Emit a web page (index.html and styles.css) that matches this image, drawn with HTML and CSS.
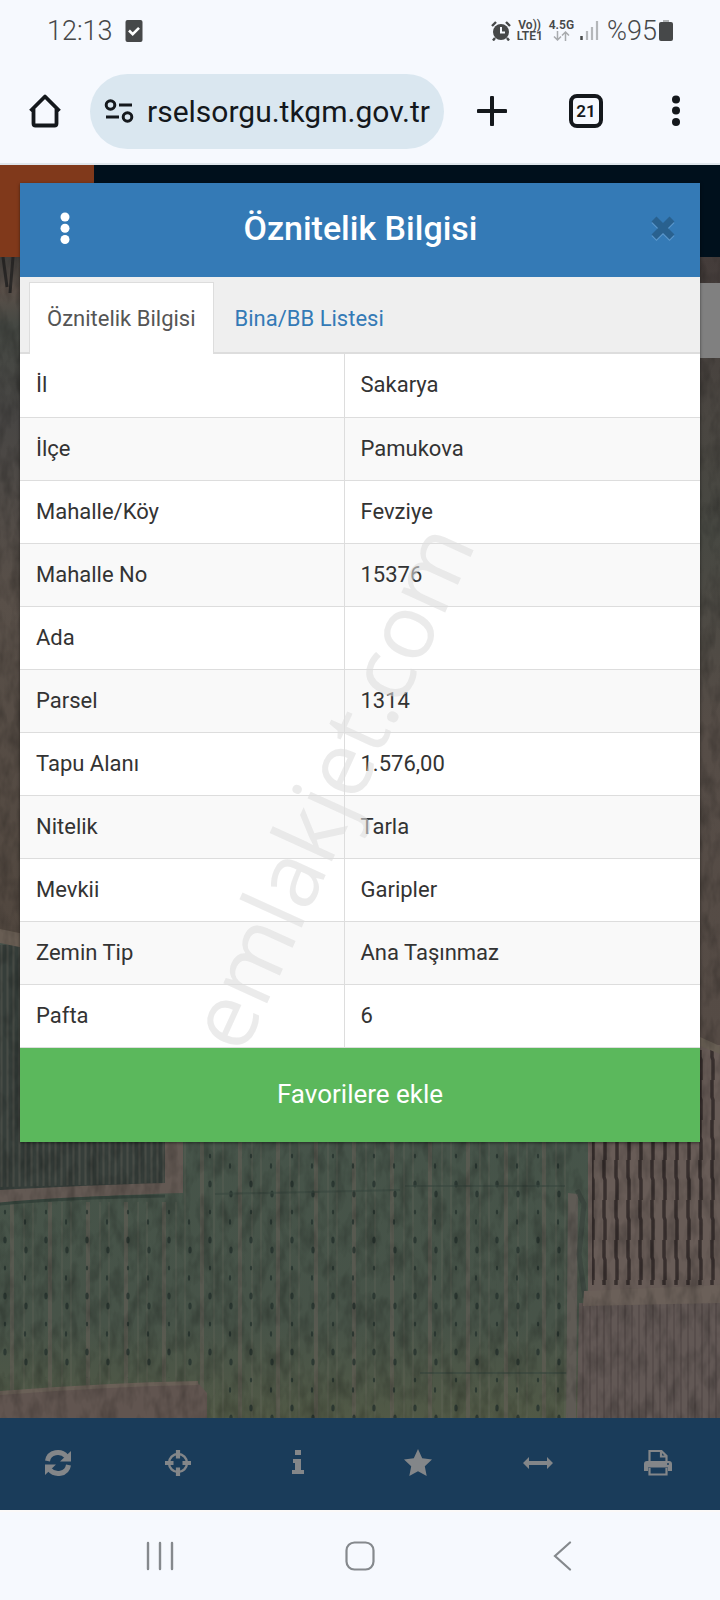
FILE: index.html
```html
<!DOCTYPE html>
<html lang="tr">
<head>
<meta charset="utf-8">
<meta name="viewport" content="width=device-width, initial-scale=1">
<title>Öznitelik Bilgisi</title>
<link rel="stylesheet" href="styles.css">
</head>
<body>
<header class="status">
  <span class="clock">12:13</span>
  <svg class="status-check" width="18" height="22" viewBox="0 0 18 22"><rect x="0.5" width="17" height="22" rx="2" fill="#464849"/><path d="M4 10.500l3.700 3.700L14 7.800" fill="none" stroke="#fff" stroke-width="2.600"/></svg>
  <div class="status-right">
    <svg width="20" height="20" viewBox="0 0 20 20"><circle cx="10" cy="11" r="8" fill="#464849"/><path d="M1 5l4-4M19 5l-4-4M4 17l-2 2.500M16 17l2 2.500" stroke="#464849" stroke-width="2.400"/><path d="M10 6v5.500h4" fill="none" stroke="#f6f9fe" stroke-width="2"/></svg>
    <span class="net"><span>Vo))</span><span>LTE1</span></span>
    <span class="net"><span>4.5G</span><svg width="17" height="10" viewBox="0 0 17 10"><path d="M4.500 0v9M1 5.500l3.500 3.500L8 5.500M12.500 10V1M9 4.500L12.500 1 16 4.500" fill="none" stroke="#a8abae" stroke-width="1.500"/></svg></span>
    <svg width="19" height="20" viewBox="0 0 19 20"><path d="M1.500 15v4" stroke="#464849" stroke-width="2.500"/><path d="M7 10v9M12 6v13M17 0v19" stroke="#b4b7ba" stroke-width="2.200"/></svg>
    <span class="percent">%95</span>
    <svg class="battery" width="14" height="21" viewBox="0 0 14 21"><path d="M4 0h6v3H4z" fill="#b0b3b5"/><rect y="2" width="14" height="19" rx="2" fill="#464849"/></svg>
  </div>
</header>

<div class="browser">
  <button class="icon-button home" aria-label="Ana sayfa"><svg width="36" height="36" viewBox="0 0 36 36"><path d="M3.500 18L18 3.500 32.500 18M6.500 15v15.500q0 2 2 2h19q2 0 2-2V15" fill="none" stroke="#14181c" stroke-width="3.800" stroke-linejoin="round"/></svg></button>
  <div class="address">
    <svg width="30" height="26" viewBox="0 0 30 26"><g fill="none" stroke="#14181c" stroke-width="3"><circle cx="6.500" cy="7" r="4.300"/><path d="M15 7h13M2 19h13"/><circle cx="23.500" cy="19" r="4.300"/></g></svg>
    <div class="url"><span>rselsorgu.tkgm.gov.tr</span></div>
  </div>
  <button class="icon-button plus" aria-label="Yeni sekme"><svg width="30" height="30" viewBox="0 0 30 30"><path d="M15 1.500v27M1.500 15h27" stroke="#14181c" stroke-width="4" stroke-linecap="round"/></svg></button>
  <button class="tab-count" aria-label="21 sekme">21</button>
  <button class="icon-button more" aria-label="Menü"><svg width="8" height="32" viewBox="0 0 8 32"><g fill="#14181c"><circle cx="4" cy="4.500" r="4"/><circle cx="4" cy="15.500" r="4"/><circle cx="4" cy="27" r="4"/></g></svg></button>
</div>

<main class="stage">
  <div class="page">
    <div class="page-head"><div class="page-logo"></div></div>
    <div class="map">
      <svg class="map-art" viewBox="0 257 720 1161" preserveAspectRatio="xMidYMid slice" aria-hidden="true">
        <defs>
          <linearGradient id="left" x1="0" y1="0" x2="0" y2="1">
            <stop offset="0" stop-color="#45423f"/><stop offset=".05" stop-color="#5a5049"/><stop offset=".1" stop-color="#454843"/><stop offset=".24" stop-color="#484644"/><stop offset=".5" stop-color="#595049"/><stop offset="1" stop-color="#51473f"/>
          </linearGradient>
          <linearGradient id="right" x1="0" y1="0" x2="0" y2="1">
            <stop offset="0" stop-color="#443c3a"/><stop offset=".2" stop-color="#4a4641"/><stop offset=".35" stop-color="#474842"/><stop offset=".6" stop-color="#564d47"/><stop offset="1" stop-color="#554b45"/>
          </linearGradient>
          <linearGradient id="green" x1="0" y1="0" x2="0" y2="1">
            <stop offset="0" stop-color="#45554b"/><stop offset=".8" stop-color="#475348"/><stop offset="1" stop-color="#515946"/>
          </linearGradient>
          <pattern id="furrow" width="6" height="60" patternUnits="userSpaceOnUse"><path d="M1.500 0v60" stroke="#5b5b53" stroke-width="2"/></pattern>
          <pattern id="rows" width="12" height="40" patternUnits="userSpaceOnUse"><path d="M4 0v17l1 3v20" fill="none" stroke="#382f2e" stroke-width="3.500"/></pattern>
          <pattern id="lines" width="38" height="60" patternUnits="userSpaceOnUse"><path d="M12 0v60" stroke="#625d54" stroke-width="4" opacity=".6"/><path d="M24 0v60M33 0v60" stroke="#65665c" stroke-width="1.500" opacity=".35"/></pattern>
          <pattern id="trees" width="41" height="56" patternUnits="userSpaceOnUse"><g fill="#22302b" opacity=".75"><ellipse cx="5" cy="8" rx="1.700" ry="3.500"/><ellipse cx="5" cy="36" rx="1.200" ry="2.500"/><ellipse cx="26" cy="18" rx="1.700" ry="3.500"/><ellipse cx="25" cy="46" rx="1.200" ry="3"/></g></pattern>
          <pattern id="fine" width="7" height="30" patternUnits="userSpaceOnUse"><path d="M2 0v30" stroke="#514846" stroke-width="2"/></pattern>
          <filter id="grain" x="0" y="0" width="100%" height="100%"><feTurbulence type="fractalNoise" baseFrequency=".09 .04" numOctaves="3" seed="4"/><feColorMatrix values="0 0 0 0 0 0 0 0 0 0 0 0 0 0 0 1.500 0 0 0 -.6"/></filter>
        </defs>
        <rect y="257" width="360" height="680" fill="url(#left)"/>
        <rect x="360" y="257" width="360" height="790" fill="url(#right)"/>
        <path d="M3 257l4 30M13 257l-3 36" stroke="#2b2928" stroke-width="3"/>
        <path d="M0 945h360v100h360v373H0z" fill="url(#green)"/>
        <path d="M0 945h166v241L0 1192z" fill="#363e3a"/>
        <path d="M0 945h166v238L0 1187z" fill="url(#furrow)" opacity=".5"/>
        <path d="M0 929l24 5v14l-24-5z" fill="#685d53"/>
        <path d="M0 1202h184v-61h384v277H0z" fill="url(#lines)"/>
        <path d="M200 1141h375v277H212v-40H0v-170h200z" fill="url(#trees)"/>
        <path d="M405 1186h160M420 1373h150M215 1194l185-4" stroke="#39483f" stroke-width="2" fill="none" opacity=".6"/>
        <path d="M165 1141h18v52q-80 2-183 10v-13q90-5 165-7z" fill="#635953"/>
        <path d="M0 1204q60-6 165-8" stroke="#36443c" stroke-width="3" fill="none"/>
        <path d="M588 1045h132v248H588z" fill="#685c57"/>
        <path d="M592 1050h128v235H592z" fill="url(#rows)"/>
        <path d="M568 1193l10 1-2 224h-10z" fill="#5f5b55"/>
        <path d="M577 1190l7 14-5 50 6 44" stroke="#343b37" stroke-width="5" fill="none" opacity=".5"/>
        <path d="M579 1303h141v115H577z" fill="#625855"/>
        <path d="M579 1303h141v115H577z" fill="url(#fine)" opacity=".6"/>
        <path d="M584 1291l136-6v18l-137 3z" fill="#6b6059"/>
        <path d="M700 1037l20 9v8l-20-8z" fill="#685f54"/>
        <path d="M0 1393q100-8 198-10l9 10v25H0z" fill="#615550"/>
        <path d="M0 1393q100-8 198-10" fill="none" stroke="#6a6057" stroke-width="4"/>
        <rect y="257" width="720" height="1161" filter="url(#grain)" opacity=".3"/>
      </svg>
      <div class="map-handle"></div>
    </div>
    <nav class="toolbar" aria-label="Harita araçları">
      <button aria-label="Yenile"><svg width="28" height="28" viewBox="0 0 28 28"><g fill="none" stroke="#838689" stroke-width="5"><path d="M3.500 12C5 2.500 17 1 22.500 7.500M24.500 16C23 25.500 11 27 5.500 20.500"/></g><path d="M27 2v10.500H16zM1 26V15.500h11z" fill="#838689"/></svg></button>
      <button aria-label="Konum"><svg width="28" height="28" viewBox="0 0 28 28"><circle cx="14" cy="14" r="9" fill="none" stroke="#838689" stroke-width="2.400"/><path d="M14 1v8.500M14 18.500V27M1 14h8.500M18.500 14H27" stroke="#838689" stroke-width="4.200"/></svg></button>
      <button aria-label="Bilgi"><svg width="28" height="28" viewBox="0 0 28 28"><path d="M11 1h6v5h-6zM9 10h8v11h3v4H8v-4h3v-7H9z" fill="#838689"/></svg></button>
      <button aria-label="Favoriler"><svg width="28" height="28" viewBox="0 0 28 28"><path d="M14 0l4.200 9.300L28 10.500l-7.200 6.800L22.700 27 14 22.200 5.300 27l1.900-9.700L0 10.500l9.800-1.200z" fill="#838689"/></svg></button>
      <button aria-label="Ölçüm"><svg width="30" height="28" viewBox="0 0 30 28"><path d="M0 14l6-6v4h18V8l6 6-6 6v-4H6v4z" fill="#838689"/></svg></button>
      <button aria-label="Yazdır"><svg width="28" height="28" viewBox="0 0 28 28"><path d="M5.500 14V2h12l5 5v7M17 2v5.500h5.500" fill="none" stroke="#838689" stroke-width="2.200"/><path fill-rule="evenodd" d="M3 12h22q3 0 3 3v7h-4v-3.500H4V22H0v-7q0-3 3-3zm21 2a1 1 0 100 2 1 1 0 000-2z" fill="#838689"/><path d="M5.500 19v6.500h17V19" fill="none" stroke="#838689" stroke-width="2.200"/></svg></button>
    </nav>
  </div>

  <section class="dialog" role="dialog" aria-labelledby="dialog-title">
    <header class="dialog-head">
      <button class="icon-button" aria-label="Seçenekler"><svg width="10" height="32" viewBox="0 0 10 32"><g fill="#fff"><circle cx="5" cy="5" r="4.500"/><circle cx="5" cy="16.300" r="4.500"/><circle cx="5" cy="27.500" r="4.500"/></g></svg></button>
      <h1 id="dialog-title">Öznitelik Bilgisi</h1>
      <button class="icon-button" aria-label="Kapat"><svg width="24" height="26" viewBox="0 0 24 26"><path d="M3 5.500l18 18m0-18l-18 18" stroke="#5c98cc" stroke-width="7"/><path d="M3 4l18 18m0-18l-18 18" stroke="#29618f" stroke-width="7"/></svg></button>
    </header>
    <div class="tabs" role="tablist">
      <button class="tab tab-active" role="tab" aria-selected="true">Öznitelik Bilgisi</button>
      <button class="tab" role="tab" aria-selected="false">Bina/BB Listesi</button>
    </div>
    <div class="details">
      <table>
        <tbody>
          <tr><th scope="row">İl</th><td>Sakarya</td></tr>
          <tr><th scope="row">İlçe</th><td>Pamukova</td></tr>
          <tr><th scope="row">Mahalle/Köy</th><td>Fevziye</td></tr>
          <tr><th scope="row">Mahalle No</th><td>15376</td></tr>
          <tr><th scope="row">Ada</th><td></td></tr>
          <tr><th scope="row">Parsel</th><td>1314</td></tr>
          <tr><th scope="row">Tapu Alanı</th><td>1.576,00</td></tr>
          <tr><th scope="row">Nitelik</th><td>Tarla</td></tr>
          <tr><th scope="row">Mevkii</th><td>Garipler</td></tr>
          <tr><th scope="row">Zemin Tip</th><td>Ana Taşınmaz</td></tr>
          <tr><th scope="row">Pafta</th><td>6</td></tr>
        </tbody>
      </table>
      <svg class="watermark" viewBox="0 0 680 693"><text transform="translate(223 702) rotate(-65.500)">emlakjet.com</text></svg>
    </div>
    <button class="favorite">Favorilere ekle</button>
  </section>
</main>

<nav class="system" aria-label="Sistem">
  <button aria-label="Son uygulamalar"><svg width="28" height="30" viewBox="0 0 28 30"><path d="M2 2v26M14 2v26M26 2v26" stroke="#85898d" stroke-width="2.400" stroke-linecap="round"/></svg></button>
  <button aria-label="Ana ekran"><svg width="30" height="30" viewBox="0 0 30 30"><rect x="1.500" y="1.500" width="27" height="27" rx="8" fill="none" stroke="#85898d" stroke-width="2.200"/></svg></button>
  <button aria-label="Geri"><svg width="28" height="30" viewBox="0 0 28 30"><path d="M24 1.500L9 15l15 13.500" fill="none" stroke="#85898d" stroke-width="2.200" stroke-linecap="round"/></svg></button>
</nav>
</body>
</html>
```
FILE: styles.css
```css
* { box-sizing: border-box; }

body {
  margin: 0;
  min-height: 100vh;
  display: flex;
  flex-direction: column;
  background: #f6f9fe;
  font-family: Roboto, "Liberation Sans", sans-serif;
  color: #333;
}

button {
  margin: 0;
  padding: 0;
  border: 0;
  background: none;
  font: inherit;
  color: inherit;
}

svg { display: block; flex: none; }

.status {
  display: flex;
  align-items: center;
  height: 61px;
  padding: 0 47px 0 47px;
  color: #464849;
}

.clock, .percent {
  font-size: 27px;
  font-weight: 300;
  line-height: 60px;
}

.status-check { margin-left: 12px; }

.status-right {
  display: flex;
  align-items: center;
  gap: 6px;
  margin-left: auto;
}

.net {
  display: flex;
  flex-direction: column;
  align-items: center;
  font-size: 12px;
  font-weight: 600;
  line-height: 11px;
}

.percent { margin-left: 2px; }

.battery { margin-left: -4px; }

.browser {
  display: flex;
  align-items: center;
  height: 104px;
  padding: 0 40px 2px 27px;
  border-bottom: 2px solid #dfe6ec;
}

.icon-button {
  display: flex;
  align-items: center;
  justify-content: center;
}

.address {
  display: flex;
  align-items: center;
  flex: 1;
  min-width: 0;
  gap: 14px;
  height: 75px;
  margin-left: 27px;
  padding: 0 14px;
  border-radius: 38px;
  background: #dae7f0;
}

.url {
  display: flex;
  justify-content: flex-end;
  flex: 1;
  min-width: 0;
  font-size: 30px;
  color: #14181c;
  white-space: nowrap;
}

.plus { margin-left: 33px; }

.tab-count {
  width: 34px;
  height: 34px;
  margin-left: 62px;
  border: 4px solid #14181c;
  border-radius: 8px;
  font-size: 17px;
  font-weight: 600;
  line-height: 26px;
  color: #14181c;
}

.more { margin-left: 69px; }

.stage {
  display: grid;
  flex: 1;
}

.page, .dialog { grid-area: 1 / 1; }

.page {
  display: flex;
  flex-direction: column;
}

.page-head {
  display: flex;
  height: 92px;
  background: #00101c;
}

.page-logo {
  width: 94px;
  background: #80391b;
}

.map {
  position: relative;
  flex: 1;
  overflow: hidden;
  background: #46514a;
}

.map-art {
  position: absolute;
  inset: 0;
  width: 100%;
  height: 100%;
}

.map-handle {
  position: absolute;
  top: 26px;
  right: 0;
  width: 60px;
  height: 75px;
  background: #808080;
}

.toolbar {
  display: grid;
  grid-template-columns: repeat(6, 1fr);
  height: 92px;
  padding-bottom: 2px;
  background: #1a3c5a;
}

.toolbar button, .system button {
  display: flex;
  align-items: center;
  justify-content: center;
}

.toolbar button { padding-right: 4px; }

.dialog {
  position: relative;
  align-self: start;
  margin: 18px 20px 0;
  background: #fff;
  box-shadow: 0 1px 3px rgba(0, 0, 0, .5);
}

.dialog-head {
  display: flex;
  align-items: center;
  justify-content: space-between;
  height: 94px;
  padding: 0 25px 4px 40px;
  background: #347ab6;
  color: #fff;
}

.dialog-head h1 {
  margin: 0;
  font-size: 34px;
  font-weight: 500;
  line-height: 40px;
}

.tabs {
  display: flex;
  height: 77px;
  padding: 5px 9px 0;
  border-bottom: 2px solid #ddd;
  background: #efefef;
}

.tab {
  height: 72px;
  padding: 0 17px;
  border: 1px solid transparent;
  border-bottom: 0;
  font-size: 22px;
  color: #347ab6;
}

.tab + .tab { margin-left: 3px; }

.tab-active {
  border-color: #ddd;
  background: #fff;
  color: #555;
}

.details { position: relative; }

table {
  width: 100%;
  border-collapse: collapse;
  table-layout: fixed;
  font-size: 22px;
  line-height: 30px;
}

th, td {
  height: 63px;
  padding: 0 16px;
  border-bottom: 1px solid #ddd;
  font-weight: 400;
  text-align: left;
}

th {
  width: 324px;
  border-right: 1px solid #ddd;
}

tr:nth-child(even) { background: #f9f9f9; }

.watermark {
  position: absolute;
  inset: 0;
  width: 100%;
  height: 100%;
  overflow: visible;
  pointer-events: none;
}

.watermark text {
  font-family: "Open Sans", sans-serif;
  font-size: 90px;
  fill: rgba(221, 221, 221, .58);
}

.favorite {
  display: block;
  width: 100%;
  height: 94px;
  padding-bottom: 2px;
  background: #5bb85c;
  font-size: 26px;
  color: #fff;
}

.system {
  display: grid;
  grid-template-columns: repeat(3, 200px);
  justify-content: center;
  height: 90px;
  border-top: 2px solid #fbf9f8;
}
```
